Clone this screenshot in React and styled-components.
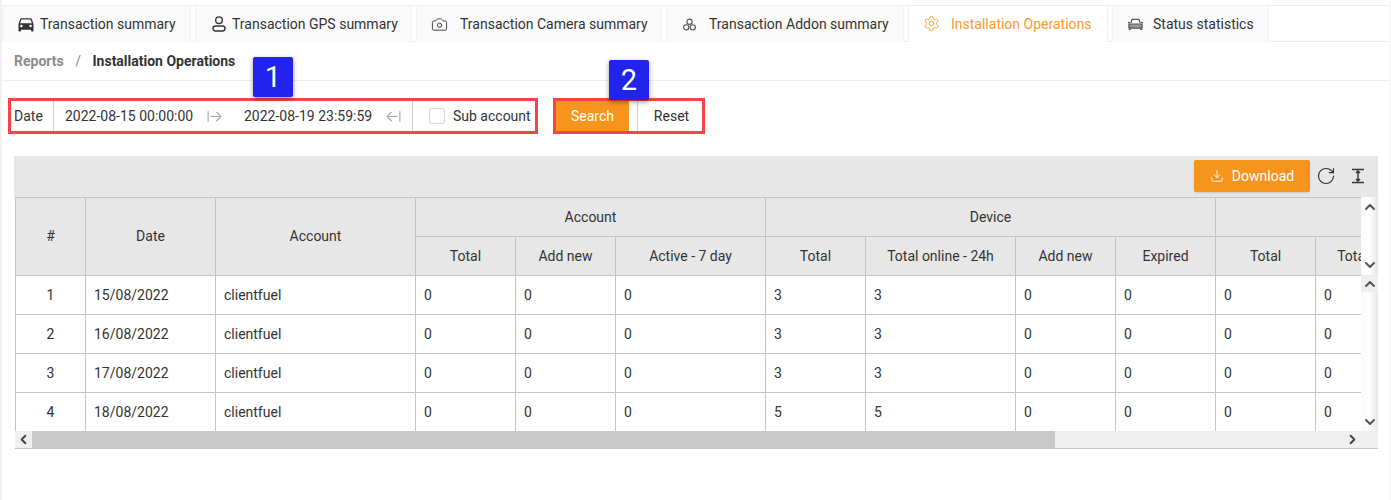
import React from 'react'
import styled, { createGlobalStyle } from 'styled-components'
import {
  ArrowLeftFromLine,
  ArrowRightFromLine,
  Camera,
  ChevronDown,
  ChevronLeft,
  ChevronRight,
  ChevronUp,
  Download,
  RotateCw,
  Settings,
} from 'lucide-react'
import { MdDirectionsCar } from 'react-icons/md'

const GlobalStyle = createGlobalStyle`
html, body {
    margin: 0;
    padding: 0;
    background: #fff;
}
body {
    font-family: Roboto, "Liberation Sans", sans-serif;
    font-size: 14px;
    color: #333;
}
* {
    box-sizing: border-box;
}
`

const UserIcon = () => (
  <svg width="14" height="16" viewBox="0 0 14 16" fill="none" stroke="currentColor" strokeWidth="1.4">
    <circle cx="7" cy="4.2" r="3.3" />
    <rect x="1" y="10" width="12" height="5" rx="2.4" />
  </svg>
)

const AddonIcon = () => (
  <svg width="15" height="15" viewBox="0 0 16 16" fill="none" stroke="#555" strokeWidth="1.2">
    <circle cx="8" cy="5" r="2.8" />
    <circle cx="4.5" cy="11" r="2.8" />
    <circle cx="11.5" cy="11" r="2.8" />
  </svg>
)

const CarOutlineIcon = () => (
  <svg width="15" height="14" viewBox="0 0 16 14" fill="none" stroke="#555" strokeWidth="1.3">
    <path d="M3 6l1.3-4h7.4L13 6" />
    <path d="M1 7h14v4.5H1z" fill="#999" />
    <path d="M2 12v1.5M14 12v1.5" strokeWidth="2" />
    <path d="M0 5.5h2M14 5.5h2" />
  </svg>
)

const RowHeightIcon = () => (
  <svg width="16" height="16" viewBox="0 0 16 16" fill="none" stroke="#333" strokeWidth="1.4">
    <path d="M2 1.5h12M2 14.5h12M8 3.5v9" />
    <path d="M6 5l2-2 2 2M6 11l2 2 2-2" fill="#333" />
  </svg>
)

const tabs = [
  { label: 'Transaction summary', icon: <MdDirectionsCar size={20} />, gap: 7, width: 189 },
  { label: 'Transaction GPS summary', icon: <UserIcon />, gap: 6, width: 217 },
  { label: 'Transaction Camera summary', icon: <Camera size={17} strokeWidth={1.4} color="#444" />, gap: 13, width: 246 },
  { label: 'Transaction Addon summary', icon: <AddonIcon />, gap: 12, width: 238 },
  { label: 'Installation Operations', icon: <Settings size={17} strokeWidth={1.4} />, gap: 12, width: 200, active: true },
  { label: 'Status statistics', icon: <CarOutlineIcon />, gap: 10, width: 157 },
]

const widths = [70, 130, 200, 100, 100, 150, 100, 150, 100, 100, 100, 150]

const rows = [
  { id: 1, date: '15/08/2022', device: 3 },
  { id: 2, date: '16/08/2022', device: 3 },
  { id: 3, date: '17/08/2022', device: 3 },
  { id: 4, date: '18/08/2022', device: 5 },
]

const Columns = () => (
  <colgroup>
    {widths.map((w, i) => (
      <col key={i} width={w} />
    ))}
  </colgroup>
)

const App = () => {
  return (
    <Page>
      <GlobalStyle />
      <TabBar>
        {tabs.map((tab) => (
          <Tab key={tab.label} $active={tab.active} $width={tab.width}>
            <TabIcon $gap={tab.gap}>{tab.icon}</TabIcon>
            {tab.label}
          </Tab>
        ))}
      </TabBar>

      <Breadcrumb>
        <Crumb>Reports</Crumb>
        <Slash>/</Slash>
        <Current>Installation Operations</Current>
      </Breadcrumb>

      <Content>
        <FilterRow>
          <Outline>
            <Badge $left={242} $top={-44}>1</Badge>
            <DateLabel>Date</DateLabel>
            <RangePicker>
              <DateText>2022-08-15 00:00:00</DateText>
              <ArrowRightFromLine size={17} strokeWidth={1.6} color="#aaa" />
              <DateText $second>2022-08-19 23:59:59</DateText>
              <ArrowLeftFromLine size={17} strokeWidth={1.6} color="#aaa" />
            </RangePicker>
            <SubAccount>
              <CheckBox />
              Sub account
            </SubAccount>
          </Outline>
          <Outline $actions>
            <Badge $left={53} $top={-41}>2</Badge>
            <SearchButton>Search</SearchButton>
            <ResetButton>Reset</ResetButton>
          </Outline>
        </FilterRow>

        <TableWrap>
          <Toolbar>
            <DownloadButton>
              <Download size={14} strokeWidth={1.5} />
              Download
            </DownloadButton>
            <RotateCw size={20} strokeWidth={1.4} color="#333" />
            <RowHeightIcon />
          </Toolbar>

          <Section>
            <Clip>
              <Table>
                <Columns />
                <thead>
                  <tr>
                    <HeadCell rowSpan={2} $tall>#</HeadCell>
                    <HeadCell rowSpan={2} $tall>Date</HeadCell>
                    <HeadCell rowSpan={2} $tall>Account</HeadCell>
                    <HeadCell colSpan={3}>Account</HeadCell>
                    <HeadCell colSpan={4}>Device</HeadCell>
                    <HeadCell colSpan={2} />
                  </tr>
                  <tr>
                    <HeadCell>Total</HeadCell>
                    <HeadCell>Add new</HeadCell>
                    <HeadCell>Active - 7 day</HeadCell>
                    <HeadCell>Total</HeadCell>
                    <HeadCell>Total online - 24h</HeadCell>
                    <HeadCell>Add new</HeadCell>
                    <HeadCell>Expired</HeadCell>
                    <HeadCell>Total</HeadCell>
                    <HeadCell>Total online - 24h</HeadCell>
                  </tr>
                </thead>
              </Table>
            </Clip>
            <VScroll>
              <ChevronUp size={16} strokeWidth={3} color="#555" />
              <ChevronDown size={16} strokeWidth={3} color="#555" />
            </VScroll>
          </Section>

          <Section>
            <Clip>
              <Table>
                <Columns />
                <tbody>
                  {rows.map((row) => (
                    <tr key={row.id}>
                      <Cell $center>{row.id}</Cell>
                      <Cell>{row.date}</Cell>
                      <Cell>clientfuel</Cell>
                      <Cell>0</Cell>
                      <Cell>0</Cell>
                      <Cell>0</Cell>
                      <Cell>{row.device}</Cell>
                      <Cell>{row.device}</Cell>
                      <Cell>0</Cell>
                      <Cell>0</Cell>
                      <Cell>0</Cell>
                      <Cell>0</Cell>
                    </tr>
                  ))}
                </tbody>
              </Table>
            </Clip>
            <VScroll $body>
              <ScrollCap>
                <ChevronUp size={16} strokeWidth={3} color="#555" />
              </ScrollCap>
              <ChevronDown size={16} strokeWidth={3} color="#555" />
            </VScroll>
          </Section>

          <HScroll>
            <ScrollEnd>
              <ChevronLeft size={15} strokeWidth={3} color="#444" />
            </ScrollEnd>
            <HThumb />
            <ScrollEnd>
              <ChevronRight size={15} strokeWidth={3} color="#444" />
            </ScrollEnd>
            <CornerGap />
          </HScroll>
        </TableWrap>
      </Content>
    </Page>
  )
}

const Page = styled.div`
height: 500px;
padding-top: 5px;
border-left: 2px solid #f0f0f0;
border-right: 1px solid #f0f0f0;
background: #fff;
overflow: hidden;
`
const TabBar = styled.div`
display: flex;
gap: 4px;
height: 37px;
border-top: 1px solid #eee;
border-bottom: 1px solid #eee;
`
const Tab = styled.div`
display: flex;
align-items: center;
width: ${(p) => p.$width}px;
height: 36px;
padding-left: 15px;
border: 1px solid #f0f0f0;
border-top: 0;
border-bottom: ${(p) => (p.$active ? '1px solid #fff' : '0')};
background-color: ${(p) => (p.$active ? '#fff' : '#fafafa')};
color: ${(p) => (p.$active ? '#fa9a2e' : '#333')};
font-size: 14px;
white-space: nowrap;
`
const TabIcon = styled.span`
display: flex;
justify-content: center;
width: 15px;
margin-right: ${(p) => p.$gap}px;
color: inherit;

svg {
    flex-shrink: 0;
}
`
const Breadcrumb = styled.div`
display: flex;
align-items: center;
height: 39px;
padding-left: 12px;
border-bottom: 1px solid #eee;
font-weight: 700;
font-size: 14px;
`
const Crumb = styled.span`
color: #8c8c8c;
`
const Slash = styled.span`
margin: 0 11.5px;
color: #8c8c8c;
font-weight: 400;
`
const Current = styled.span`
color: #333;
`
const Content = styled.div`
padding: 17px 12px 0 6px;
`
const FilterRow = styled.div`
display: flex;
gap: 15px;
height: 36px;
`
const Outline = styled.div`
position: relative;
display: flex;
align-items: center;
width: ${(p) => (p.$actions ? '152px' : '530px')};
border: 3px solid #f9414a;
background: #fff;
`
const Badge = styled.div`
position: absolute;
left: ${(p) => p.$left}px;
top: ${(p) => p.$top}px;
width: 40px;
height: 40px;
display: flex;
align-items: center;
justify-content: center;
border-radius: 2px;
background-color: #2323ee;
box-shadow: 0 2px 5px rgba(0, 0, 0, 0.4);
color: #fff;
font-size: 29px;
z-index: 2;
`
const DateLabel = styled.div`
display: flex;
align-items: center;
width: 43px;
height: 100%;
padding-left: 3px;
border-right: 1px solid #d0d0d0;
`
const RangePicker = styled.div`
display: flex;
align-items: center;
width: 359px;
height: 100%;
padding-left: 11px;
border-right: 1px solid #d0d0d0;
`
const DateText = styled.span`
width: 128px;
margin-left: ${(p) => (p.$second ? '21px' : '0')};
margin-right: 13px;
white-space: nowrap;
`
const SubAccount = styled.label`
display: flex;
align-items: center;
gap: 8px;
padding-left: 16px;
white-space: nowrap;
`
const CheckBox = styled.span`
width: 16px;
height: 16px;
border: 1px solid #d9d9d9;
border-radius: 2px;
background: #fff;
`
const SearchButton = styled.button`
width: 73px;
height: 100%;
border: 0;
background-color: #f7941d;
color: #fff;
font: inherit;
`
const ResetButton = styled.button`
width: 65px;
height: 100%;
margin-left: 8px;
padding: 0 0 0 3px;
border: 0;
border-left: 1px solid #d0d0d0;
background: #fff;
color: #333;
font: inherit;
`
const TableWrap = styled.div`
margin: 22px 0 0 6px;
`
const Toolbar = styled.div`
display: flex;
align-items: center;
justify-content: flex-end;
gap: 14px;
height: 41px;
padding: 0 12px 1px 0;
background-color: #e7e7e7;
`
const DownloadButton = styled.button`
display: flex;
align-items: center;
justify-content: center;
gap: 8px;
width: 116px;
height: 32px;
margin-right: -8px;
border: 0;
border-radius: 2px;
background-color: #f7941d;
color: #fff;
font: inherit;
box-shadow: 0 1px 2px rgba(0, 0, 0, 0.15);
`
const Section = styled.div`
display: flex;
margin-left: 1px;
`
const Clip = styled.div`
flex: 1;
min-width: 0;
overflow: hidden;
`
const Table = styled.table`
width: 1450px;
table-layout: fixed;
border-collapse: separate;
border-spacing: 0;
`
const HeadCell = styled.th`
height: 39px;
padding: 0 8px ${(p) => (p.$tall ? '2px' : '0')};
border-left: 1px solid #c4c4c4;
border-top: 1px solid #c4c4c4;
background-color: #e7e7e7;
color: #333;
font-weight: 400;
font-size: 14px;
text-align: center;
white-space: nowrap;
`
const Cell = styled.td`
height: 39px;
padding: 0 8px;
border-left: 1px solid #c4c4c4;
border-top: 1px solid #c4c4c4;
background: #fff;
text-align: ${(p) => (p.$center ? 'center' : 'left')};
white-space: nowrap;
`
const VScroll = styled.div`
flex: 0 0 17px;
display: flex;
flex-direction: column;
align-items: center;
justify-content: space-between;
padding: ${(p) => (p.$body ? '0 0 1px' : '2px 0')};
background: linear-gradient(to right, #fafafa, #fff 45%, #e6e6e6);
`
const ScrollCap = styled.div`
width: 100%;
height: 17px;
display: flex;
align-items: center;
justify-content: center;
background-color: #eee;
`
const HScroll = styled.div`
display: flex;
align-items: center;
height: 18px;
margin-left: 1px;
border-bottom: 1px solid #c4c4c4;
background-color: #efefef;
`
const ScrollEnd = styled.div`
flex: 0 0 17px;
display: flex;
justify-content: center;
`
const HThumb = styled.div`
width: 1023px;
height: 100%;
margin-right: 289px;
background-color: #c9c9c9;
`
const CornerGap = styled.div`
flex: 1;
`

export default App
